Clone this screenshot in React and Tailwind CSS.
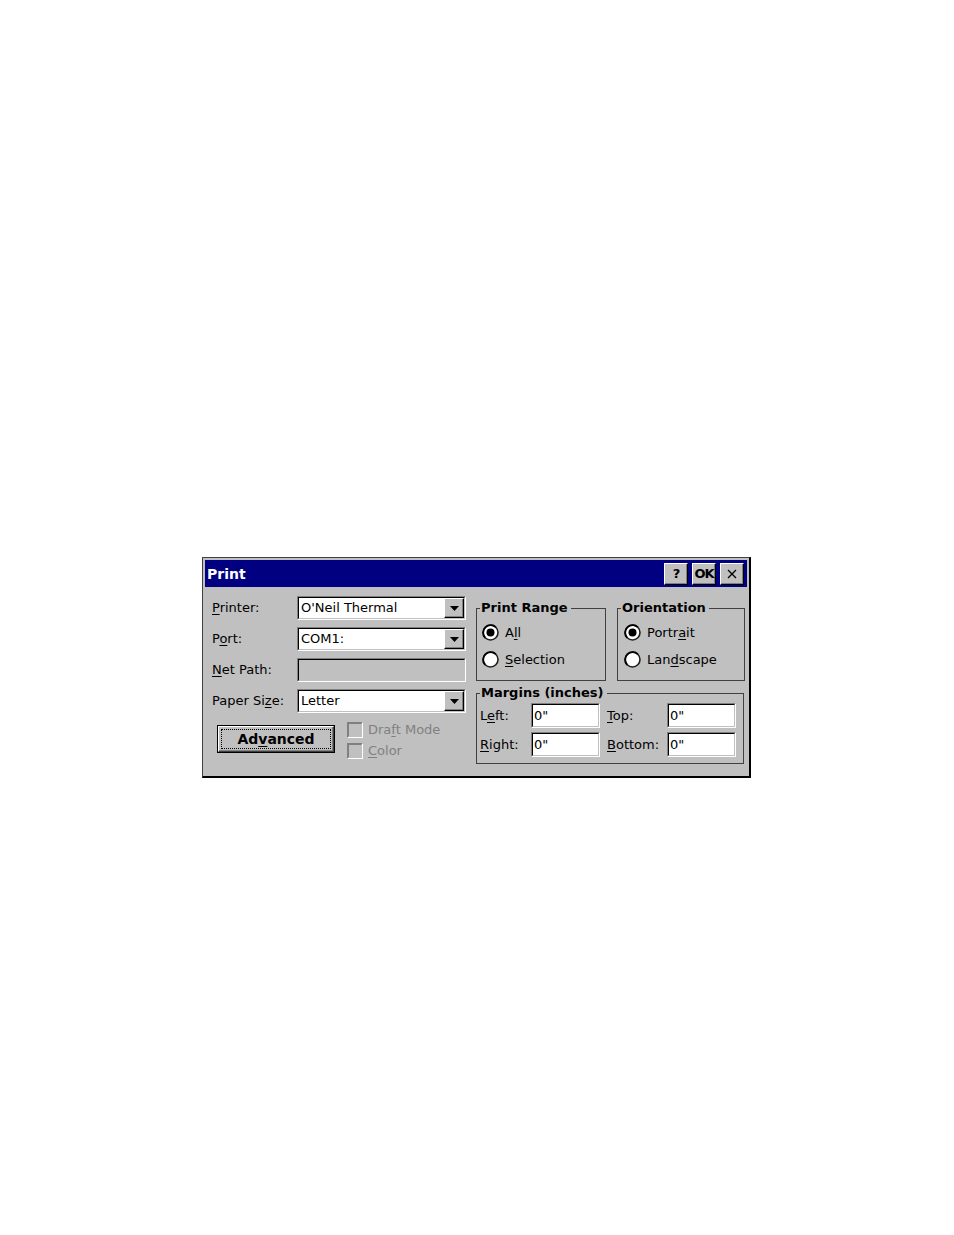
import React from 'react';

function Key({ children }) {
  return <span className="underline underline-offset-[2px] decoration-1">{children}</span>;
}

function Sunken({ className = '', inner = 'bg-white', children }) {
  return (
    <div className={`border border-t-[#808080] border-l-[#808080] border-b-white border-r-white ${className}`}>
      <div className={`h-full border border-t-black border-l-black border-b-[#c0c0c0] border-r-[#c0c0c0] flex items-center ${inner}`}>
        {children}
      </div>
    </div>
  );
}

function DropButton() {
  return (
    <div className="h-full w-[20px] bg-[#c0c0c0] border border-t-white border-l-white border-b-black border-r-black shadow-[inset_-1px_-1px_#808080] flex items-center justify-center">
      <svg width="9" height="5" viewBox="0 0 9 5">
        <polygon points="0,0 9,0 4.5,5" fill="#000" />
      </svg>
    </div>
  );
}

function Combo({ value }) {
  return (
    <Sunken className="w-[169px] h-[24px]">
      <span className="flex-1 pl-[2px] leading-[16px]">{value}</span>
      <DropButton />
    </Sunken>
  );
}

function Radio({ checked }) {
  return (
    <svg width="17" height="17" viewBox="0 0 17 17" className="shrink-0">
      <circle cx="8.5" cy="8.5" r="7.5" fill="#fff" stroke="#202020" strokeWidth="1.6" />
      <path d="M3.2 13.8 A7.5 7.5 0 0 1 13.8 3.2" fill="none" stroke="#000" strokeWidth="1.8" />
      {checked && <circle cx="8.5" cy="8.5" r="4" fill="#000" />}
    </svg>
  );
}

function CheckBox() {
  return (
    <div className="w-[16px] h-[16px] border border-t-[#808080] border-l-[#808080] border-b-white border-r-white">
      <div className="h-full border border-t-[#808080] border-l-[#808080] border-b-[#c0c0c0] border-r-[#c0c0c0] bg-[#c0c0c0]" />
    </div>
  );
}

function TitleButton({ children }) {
  return (
    <div className="w-[24px] h-[22px] bg-[#c0c0c0] border border-t-white border-l-white border-b-black border-r-black shadow-[inset_-1px_-1px_#808080] flex items-center justify-center text-black font-bold text-[13px] tracking-[-1px] leading-none">
      {children}
    </div>
  );
}

function Group({ title, className, children }) {
  return (
    <fieldset className={`border border-[#404040] ${className}`}>
      <legend className="ml-[3px] pl-[1px] pr-[3px] font-bold leading-[16px]">{title}</legend>
      {children}
    </fieldset>
  );
}

function MarginInput() {
  return (
    <Sunken className="w-[69px] h-[25px]">
      <span className="pl-[1px] leading-[16px]">0"</span>
    </Sunken>
  );
}

export default function App() {
  const rows = [
    { label: <><Key>P</Key>rinter:</>, field: <Combo value="O'Neil Thermal" /> },
    { label: <>P<Key>o</Key>rt:</>, field: <Combo value="COM1:" /> },
    { label: <><Key>N</Key>et Path:</>, field: <Sunken className="w-[169px] h-[24px]" inner="bg-[#c0c0c0]" /> },
    { label: <>Paper Si<Key>z</Key>e:</>, field: <Combo value="Letter" /> },
  ];

  return (
    <div className="w-[954px] h-[1235px] bg-white pt-[557px] pl-[202px] font-['DejaVu_Sans',sans-serif] text-[13px] text-black">
      <div className="w-[549px] h-[221px] bg-[#c0c0c0] border-t border-l border-t-[#404040] border-l-[#404040] border-r-2 border-b-2 border-r-black border-b-black p-[2px] flex flex-col">
        {/* title bar */}
        <div className="h-[27px] bg-[#000080] flex items-center pl-[2px] pr-[3px]">
          <span className="flex-1 text-white font-bold text-[14px] leading-[16px]">Print</span>
          <div className="flex gap-[4px]">
            <TitleButton>?</TitleButton>
            <TitleButton>OK</TitleButton>
            <TitleButton>
              <svg width="10" height="10" viewBox="0 0 10 10">
                <path d="M1 1 L9 9 M9 1 L1 9" stroke="#000" strokeWidth="1.3" />
              </svg>
            </TitleButton>
          </div>
        </div>

        <div className="flex-1 flex">
          {/* left column */}
          <div className="w-[261px] pl-[7px] pt-[9px]">
            <div className="flex flex-col gap-[7px]">
              {rows.map((r, i) => (
                <div key={i} className="flex items-center h-[24px]">
                  <span className="w-[85px] leading-[16px]">{r.label}</span>
                  {r.field}
                </div>
              ))}
            </div>
            <div className="mt-[9px] flex items-start">
              <div className="ml-[5px] mt-[3px] w-[118px] h-[28px] border border-black">
                <div className="h-full border border-t-white border-l-white border-b-[#404040] border-r-[#404040] shadow-[inset_-1px_-1px_#808080] p-[2px]">
                  <div className="h-full border border-dotted border-black flex items-center justify-center font-bold text-[14px] leading-[16px]">
                    Ad<Key>v</Key>anced
                  </div>
                </div>
              </div>
              <div className="ml-[12px] flex flex-col gap-[5px] text-[#808080]">
                <div className="flex items-center h-[16px]">
                  <CheckBox />
                  <span className="ml-[5px] leading-[16px]">Dra<Key>f</Key>t Mode</span>
                </div>
                <div className="flex items-center h-[16px]">
                  <CheckBox />
                  <span className="ml-[5px] leading-[16px]"><Key>C</Key>olor</span>
                </div>
              </div>
            </div>
          </div>

          {/* right column */}
          <div className="ml-[10px] w-[269px] pt-[13px]">
            <div className="flex gap-[11px]">
              <Group title="Print Range" className="w-[130px] h-[81px]">
                <div className="pl-[5px] pt-[8px] flex flex-col gap-[10px]">
                  <div className="flex items-center h-[17px]">
                    <Radio checked />
                    <span className="ml-[6px] leading-[16px]">A<Key>l</Key>l</span>
                  </div>
                  <div className="flex items-center h-[17px]">
                    <Radio />
                    <span className="ml-[6px] leading-[16px]"><Key>S</Key>election</span>
                  </div>
                </div>
              </Group>
              <Group title="Orientation" className="w-[128px] h-[81px]">
                <div className="pl-[6px] pt-[8px] flex flex-col gap-[10px]">
                  <div className="flex items-center h-[17px]">
                    <Radio checked />
                    <span className="ml-[6px] leading-[16px]">Portr<Key>a</Key>it</span>
                  </div>
                  <div className="flex items-center h-[17px]">
                    <Radio />
                    <span className="ml-[6px] leading-[16px]">Lan<Key>d</Key>scape</span>
                  </div>
                </div>
              </Group>
            </div>

            <Group title="Margins (inches)" className="mt-[4px] w-[268px] h-[79px]">
              <div className="pl-[3px] pt-[2px] flex flex-col gap-[4px]">
                <div className="flex items-center h-[25px]">
                  <span className="w-[51px] leading-[16px]">L<Key>e</Key>ft:</span>
                  <MarginInput />
                  <span className="ml-[7px] w-[60px] leading-[16px]"><Key>T</Key>op:</span>
                  <MarginInput />
                </div>
                <div className="flex items-center h-[25px]">
                  <span className="w-[51px] leading-[16px]"><Key>R</Key>ight:</span>
                  <MarginInput />
                  <span className="ml-[7px] w-[60px] leading-[16px]"><Key>B</Key>ottom:</span>
                  <MarginInput />
                </div>
              </div>
            </Group>
          </div>
        </div>
      </div>
    </div>
  );
}
